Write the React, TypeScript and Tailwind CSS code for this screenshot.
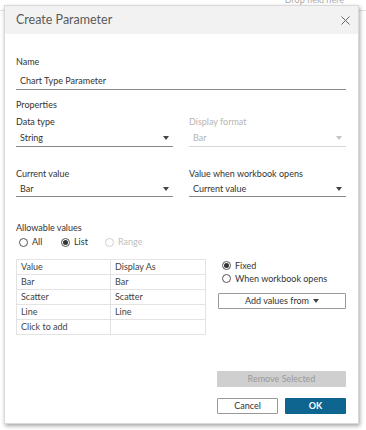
import React from 'react';

const font = { fontFamily: 'Lato, "Open Sans", sans-serif' };

const Label: React.FC<{ text: string; muted?: boolean; className?: string }> = ({ text, muted, className = '' }) => (
  <div className={`h-[12px] leading-[12px] text-[9px] ${muted ? 'text-[#b5b5b5]' : 'text-[#333]'} ${className}`}>{text}</div>
);

const Caret: React.FC<{ muted?: boolean }> = ({ muted }) => (
  <svg width="6" height="4" viewBox="0 0 6 4" className="shrink-0">
    <path d="M0 0 L6 0 L3 4 Z" fill={muted ? '#c4c4c4' : '#444'} />
  </svg>
);

const Select: React.FC<{ value: string; muted?: boolean; className?: string }> = ({ value, muted, className = '' }) => (
  <div className={`flex items-center justify-between pl-[4px] pr-[4px] border-b ${muted ? 'border-[#d6d6d6] text-[#b5b5b5]' : 'border-[#888] text-[#333]'} text-[9px] ${className}`}>
    <span>{value}</span>
    <Caret muted={muted} />
  </div>
);

const Radio: React.FC<{ label: string; checked?: boolean; muted?: boolean; className?: string }> = ({ label, checked, muted, className = '' }) => (
  <div className={`flex items-center gap-[4px] text-[9px] ${muted ? 'text-[#c0c0c0]' : 'text-[#333]'} ${className}`}>
    <span className={`w-[9px] h-[9px] rounded-full border flex items-center justify-center ${muted ? 'border-[#d0d0d0]' : 'border-[#555]'}`}>
      {checked && <span className="w-[5px] h-[5px] rounded-full bg-[#333]" />}
    </span>
    <span>{label}</span>
  </div>
);

const rows: [string, string][] = [
  ['Value', 'Display As'],
  ['Bar', 'Bar'],
  ['Scatter', 'Scatter'],
  ['Line', 'Line'],
  ['Click to add', ''],
];

export default function App() {
  return (
    <div className="relative w-[366px] h-[430px] bg-white overflow-hidden" style={font}>
      {/* page behind the dialog */}
      <div className="h-[11px] border-b border-[#e2e2e2] flex justify-end pr-[22px] overflow-hidden">
        <span className="text-[9px] text-[#aaa] leading-[12px] -mt-[6px]">Drop field here</span>
      </div>

      {/* modal */}
      <div className="absolute left-[4px] top-[5px] w-[355px] h-[419px] bg-white border border-[#d9d9d9] shadow-[1px_2px_4px_rgba(0,0,0,0.35)] flex flex-col">
        <div className="h-[28px] bg-[#f2f2f2] flex items-center justify-between pl-[11px] pr-[8px] shrink-0">
          <span className="text-[12.5px] text-[#5a5a5a]">Create Parameter</span>
          <svg width="9" height="9" viewBox="0 0 9 9">
            <path d="M0.5 0.5 L8.5 8.5 M8.5 0.5 L0.5 8.5" stroke="#666" strokeWidth="1" />
          </svg>
        </div>

        <div className="flex flex-col pl-[11px] pr-[12px] pb-[11px]">
          <Label text="Name" className="mt-[22px]" />
          <div className="mt-[5px] h-[17px] flex items-center pl-[4px] border-b border-[#888] text-[9px] text-[#333]">
            Chart Type Parameter
          </div>

          <Label text="Properties" className="mt-[9px]" />

          <div className="grid grid-cols-2 gap-x-[16px] mt-[5px]">
            <div className="flex flex-col">
              <Label text="Data type" />
              <Select value="String" className="mt-[2px] h-[17px]" />
            </div>
            <div className="flex flex-col">
              <Label text="Display format" muted />
              <Select value="Bar" muted className="mt-[2px] h-[17px]" />
            </div>
          </div>

          <div className="grid grid-cols-2 gap-x-[16px] mt-[21px]">
            <div className="flex flex-col">
              <Label text="Current value" />
              <Select value="Bar" className="mt-[1px] h-[16px]" />
            </div>
            <div className="flex flex-col">
              <Label text="Value when workbook opens" />
              <Select value="Current value" className="mt-[1px] h-[16px]" />
            </div>
          </div>

          <Label text="Allowable values" className="mt-[25px]" />
          <div className="flex items-center h-[12px] mt-[2px] pl-[3px]">
            <Radio label="All" className="w-[42px]" />
            <Radio label="List" checked className="w-[44px]" />
            <Radio label="Range" muted />
          </div>

          <div className="flex mt-[11px] gap-[12px]">
            <div className="w-[190px] border border-[#e3e3e3]">
              {rows.map(([v, d], i) => (
                <div key={i} className={`flex text-[9px] text-[#444] ${i > 0 ? 'h-[15px] border-t border-[#e3e3e3]' : 'h-[14px]'}`}>
                  <div className="w-[94px] border-r border-[#e3e3e3] pl-[4px] flex items-center">{v}</div>
                  <div className="flex-1 pl-[4px] flex items-center">{d}</div>
                </div>
              ))}
            </div>
            <div className="flex-1 flex flex-col">
              <Radio label="Fixed" checked className="h-[13px] pl-[4px]" />
              <Radio label="When workbook opens" className="h-[13px] pl-[4px]" />
              <div className="mt-[8px] h-[16px] border border-[#999] rounded-[1px] flex items-center justify-center gap-[4px] text-[9px] text-[#333]">
                <span>Add values from</span>
                <Caret />
              </div>
            </div>
          </div>

          <div className="flex justify-end mt-[36px]">
            <div className="w-[129px] h-[16px] bg-[#cfcfcf] rounded-[1px] flex items-center justify-center text-[9px] text-[#9a9a9a]">
              Remove Selected
            </div>
          </div>

          <div className="flex justify-end gap-[7px] mt-[11px]">
            <div className="w-[61px] h-[16px] border border-[#999] rounded-[1px] flex items-center justify-center text-[9px] text-[#333]">
              Cancel
            </div>
            <div className="w-[61px] h-[16px] bg-[#0e6690] rounded-[1px] flex items-center justify-center text-[9px] font-bold text-white">
              OK
            </div>
          </div>
        </div>
      </div>
    </div>
  );
}
